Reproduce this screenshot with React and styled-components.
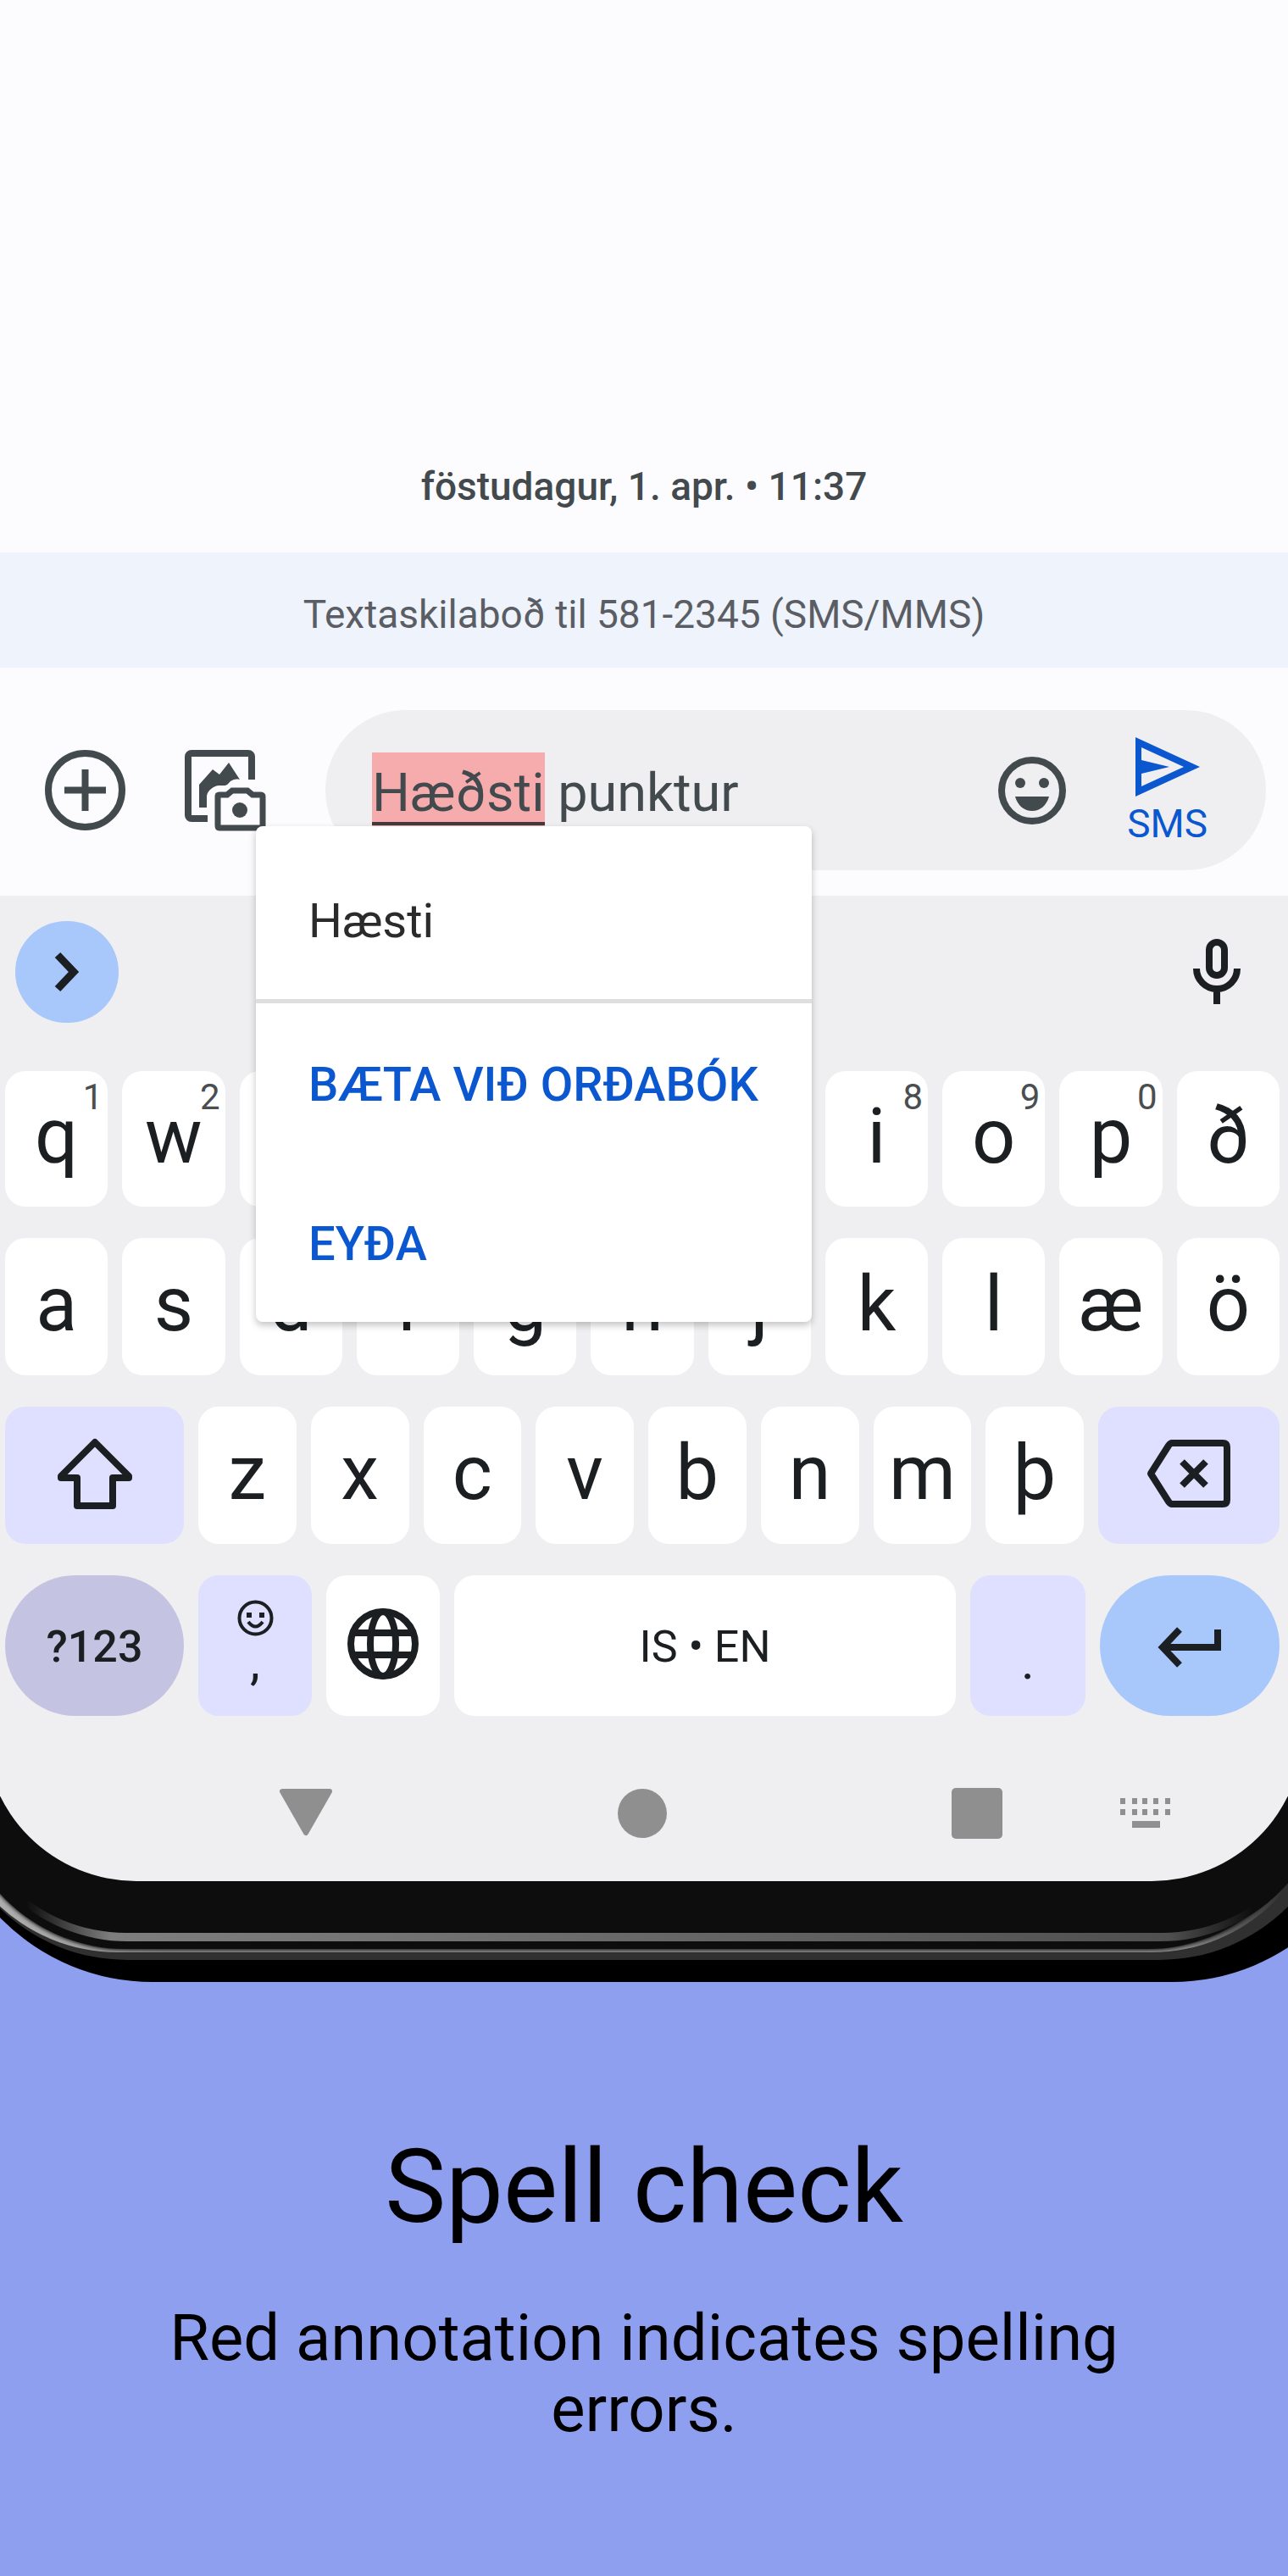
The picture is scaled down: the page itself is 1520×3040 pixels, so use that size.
import React from "react";
import styled, { createGlobalStyle } from "styled-components";

const ink = "#1b1f21";
const slate = "#434a4e";
const blue = "#0b57d0";

const GlobalStyle = createGlobalStyle`
  *, *::before, *::after { box-sizing: border-box; }
  body {
    margin: 0;
    background: #8f9fef;
    font-family: Roboto, "Noto Sans", "Liberation Sans", sans-serif;
  }
  button, input { font: inherit; }
  svg { display: block; }
`;

const Page = styled.main`
  overflow: hidden;
`;

/* Phone body: each layer is slightly smaller than the one around it. */
const Frame = styled.div`
  margin: 0 -114px 0 -71px;
  padding-bottom: 26px;
  background: #000;
  border-radius: 0 0 251px 251px;
`;

const Rim = styled.div`
  margin: 0 51px 0 6px;
  padding-bottom: 9px;
  background: #303030;
  border-radius: 0 0 215px 215px;
`;

const Shine = styled.div`
  margin: 0 19px 0 -1px;
  padding-bottom: 4px;
  background: linear-gradient(90deg, #b8b8b8 0, #a0a0a0 160px, #8a8a8a 260px, #8a8a8a 90%, #303030 97%);
  border-radius: 0 0 205px 205px;
`;

const Groove = styled.div`
  margin: 0 10px 0 14px;
  padding-bottom: 9px;
  background: #0d0d0d;
  border-radius: 0 0 200px 200px;
  box-shadow: 0 0 4px 1px #0d0d0d;
`;

const Glint = styled.div`
  margin: 0 -15px 0 3px;
  padding-bottom: 10px;
  background: linear-gradient(90deg, #0d0d0d 80px, #7e7e7e 180px, #757575 460px, #505050 calc(100% - 190px), #0d0d0d calc(100% - 90px));
  border-radius: 0 0 200px 200px;
`;

const Bezel = styled.div`
  margin: 0 7px;
  padding: 0 24px 61px;
  background: #0d0d0d;
  border-radius: 0 0 190px 190px;
`;

const Screen = styled.div`
  padding: 0 18px;
  background: linear-gradient(#fcfcff 1057px, #efeff1 1057px);
  border-radius: 0 0 179px 179px;
`;

const Conversation = styled.section`
  padding: 546px 40px 50px;
  text-align: center;
`;

const DateLine = styled.time`
  display: block;
  font-size: 46px;
  font-weight: 500;
  line-height: 56px;
  color: ${slate};
`;

const Recipient = styled.p`
  margin: 0;
  padding: 45px 40px 35px;
  background: #eef3fc;
  font-size: 46px;
  line-height: 56px;
  text-align: center;
  color: #5a5e64;
`;

const Composer = styled.form`
  display: flex;
  align-items: center;
  gap: 70px;
  padding: 50px 26px 30px 53px;
`;

const IconButton = styled.button`
  flex: none;
  display: block;
  padding: 0;
  border: 0;
  background: none;
  color: ${(p) => p.$color || ink};
`;

const Field = styled.div`
  position: relative;
  flex: 1;
  min-width: 0;
  display: flex;
  align-items: center;
  gap: 72px;
  height: 189px;
  padding: 0 69px 0 55px;
  border-radius: 95px;
  background: #efeff1;
`;

const MessageInput = styled.input`
  flex: 1;
  min-width: 0;
  height: 90px;
  padding: 6px 0 0;
  border: 0;
  outline: 0;
  font-size: 63px;
  color: ${slate};
  background:
    linear-gradient(#44393d, #44393d) 0 82px / 204px 4px no-repeat,
    linear-gradient(#f6abad, #f6abad) 0 0 / 204px 88px no-repeat;
`;

const SendButton = styled.button`
  flex: none;
  display: flex;
  flex-direction: column;
  align-items: center;
  gap: 4px;
  padding: 4px 0 0;
  border: 0;
  background: none;
  color: ${blue};
  font-size: 46px;
  line-height: 56px;
`;

const Suggestions = styled.div`
  position: absolute;
  z-index: 2;
  top: 137px;
  left: -82px;
  min-width: 656px;
  border-radius: 8px;
  background: #fff;
  box-shadow: 0 4px 8px rgba(0, 0, 0, 0.24);
`;

const SuggestionItem = styled.button`
  display: block;
  width: 100%;
  height: ${(p) => (p.$action ? 188 : 204)}px;
  padding: ${(p) => (p.$action ? 4 : 20)}px 60px 0 62px;
  border: 0;
  background: none;
  font-size: 56px;
  font-weight: ${(p) => (p.$action ? 500 : 400)};
  text-align: left;
  white-space: nowrap;
  color: ${(p) => (p.$action ? blue : "#2b2b2b")};
`;

const Divider = styled.hr`
  height: 5px;
  margin: 0;
  border: 0;
  background: #dedede;
`;

const Keyboard = styled.section`
  padding: 30px 10px 0 6px;
  background: #efeff1;
`;

const Toolbar = styled.div`
  display: flex;
  align-items: center;
  justify-content: space-between;
  padding: 0 46px 57px 12px;
`;

const ExpandButton = styled.button`
  display: grid;
  place-items: center;
  width: 122px;
  height: 120px;
  padding: 0;
  border: 0;
  border-radius: 61px;
  background: #a8c7fa;
  color: ${ink};
`;

const Rows = styled.div`
  display: grid;
  gap: 37px;
`;

const Row = styled.div`
  display: flex;
  gap: 17px;
  height: ${(p) => p.$height || 162}px;
`;

const tones = {
  plain: "#fff",
  soft: "#dfdfff",
  mode: "#c4c4e2",
  go: "#a8c7fa",
};

const Key = styled.button`
  position: relative;
  flex: ${(p) => (p.$width ? `0 0 ${p.$width}px` : "1 1 0")};
  min-width: 0;
  display: flex;
  flex-direction: column;
  align-items: center;
  justify-content: center;
  padding: ${(p) => (p.$label ? "4px 0 0" : "0 0 4px")};
  border: 0;
  border-radius: ${(p) => (p.$round ? 83 : 24)}px;
  background: ${(p) => tones[p.$tone || "plain"]};
  color: ${ink};
  font-size: ${(p) => (p.$label ? 52 : 90)}px;
  font-weight: ${(p) => (p.$round ? 500 : 400)};
  line-height: 1;
`;

const Hint = styled.span`
  position: absolute;
  top: 10px;
  right: 6px;
  font-size: 42px;
  line-height: 42px;
  color: #4a4e50;
`;

const Mark = styled.span`
  font-size: 60px;
  line-height: 60px;
`;

const PunctuationKey = styled(Key)`
  justify-content: flex-end;
  padding-bottom: 34px;
`;

const NavBar = styled.nav`
  display: flex;
  align-items: center;
  justify-content: space-between;
  height: 195px;
  padding: 34px 138px 0 329px;
`;

const NavGroup = styled.div`
  display: flex;
  align-items: center;
  gap: 138px;
`;

const Caption = styled.section`
  padding: 170px 180px 156px;
  text-align: center;
  color: #000;
`;

const Title = styled.h1`
  margin: 0;
  font-size: 121px;
  font-weight: 400;
  line-height: 144px;
`;

const Description = styled.p`
  margin: 64px 0 0;
  font-size: 76px;
  line-height: 84px;
`;

const Icon = ({ w, h, sw = 8, children }) => (
  <svg width={w} height={h} viewBox={`0 0 ${w} ${h}`} fill="none" stroke="currentColor" strokeWidth={sw} aria-hidden="true">
    {children}
  </svg>
);

const PlusIcon = () => (
  <Icon w={95} h={95}>
    <circle cx="47.5" cy="47.5" r="43.5" />
    <path d="M47.5 23v49M23 47.5h49" />
  </Icon>
);

const GalleryIcon = () => (
  <Icon w={96} h={96}>
    <path d="M79 35V8a4 4 0 0 0-4-4H8a4 4 0 0 0-4 4v69a4 4 0 0 0 4 4h19" />
    <path
      d="M33 23l8 6 11-14 13 20c-5-1-8 0-11 2-3 3-4 5-8 5-8 0-11 0-16 5-3 3-4 5-4 10v11h-9V41z"
      fill="currentColor"
      stroke="none"
    />
    <path d="M39 55q0-2 2-2h9l6-5h18l6 5h9q3 0 3 2v34q0 3-3 3H41q-2 0-2-3z" strokeWidth="7" />
    <circle cx="65" cy="71" r="9" fill="currentColor" stroke="none" />
  </Icon>
);

const GrinIcon = () => (
  <Icon w={80} h={80}>
    <circle cx="40" cy="40" r="36" />
    <circle cx="26" cy="31" r="6" fill="currentColor" stroke="none" />
    <circle cx="54" cy="31" r="6" fill="currentColor" stroke="none" />
    <path d="M20 47h40c-3 11-11 17-20 17s-17-6-20-17z" fill="currentColor" stroke="none" />
  </Icon>
);

const SendIcon = () => (
  <Icon w={76} h={70}>
    <path
      d="M0 0l76 35L0 70zM7 12v15l33 8-33 8v15l50-23z"
      fill="currentColor"
      fillRule="evenodd"
      stroke="none"
    />
  </Icon>
);

const ChevronIcon = () => (
  <Icon w={30} h={48} sw={9}>
    <path d="M4 4l19 20L4 44" />
  </Icon>
);

const MicIcon = () => (
  <Icon w={56} h={78}>
    <rect x="19" y="4" width="18" height="39" rx="9" />
    <path d="M4 35a24 24 0 0 0 48 0M28 59v18" />
  </Icon>
);

const ShiftIcon = () => (
  <Icon w={88} h={86}>
    <path d="M44 6L4 46v2h19v33h42V48h19v-2z" strokeLinejoin="round" />
  </Icon>
);

const BackspaceIcon = () => (
  <Icon w={100} h={80}>
    <path d="M30 4h60q5 0 5 5v62q0 5-5 5H30q-2 0-4-3L5 40 26 7q2-3 4-3z" strokeLinejoin="round" />
    <path d="M42 26l28 28M70 26L42 54" />
  </Icon>
);

const SmileIcon = () => (
  <Icon w={43} h={43} sw={4}>
    <circle cx="21.5" cy="21.5" r="19" />
    <path d="M11 15h6v6h-6zM26 15h6v6h-6z" fill="currentColor" stroke="none" />
    <path d="M13 26q8.500 11 17 0" />
  </Icon>
);

const GlobeIcon = () => (
  <Icon w={84} h={84}>
    <circle cx="42" cy="42" r="38" />
    <ellipse cx="42" cy="42" rx="15" ry="38" />
    <path d="M6 29h72M6 55h72" />
  </Icon>
);

const EnterIcon = () => (
  <Icon w={76} h={48}>
    <path d="M71 3v21H6M26 3L6 24l20 21" />
  </Icon>
);

const BackIcon = () => (
  <Icon w={64} h={60} sw={6}>
    <path d="M4 4h56L32 53z" fill="currentColor" strokeLinejoin="round" />
  </Icon>
);

const HomeIcon = () => (
  <Icon w={60} h={60}>
    <circle cx="30" cy="30" r="29" fill="currentColor" stroke="none" />
  </Icon>
);

const RecentIcon = () => (
  <Icon w={60} h={60}>
    <rect width="60" height="60" rx="5" fill="currentColor" stroke="none" />
  </Icon>
);

const ImeIcon = () => (
  <Icon w={61} h={35}>
    {[4, 18, 30, 43, 57].map((x) => (
      <path key={x} d={`M${x - 3} 0h6v7h-6zM${x - 3} 13h6v7h-6z`} fill="currentColor" stroke="none" />
    ))}
    <rect x="15" y="27" width="33" height="8" fill="currentColor" stroke="none" />
  </Icon>
);

const topRow = [
  ["q", "1"], ["w", "2"], ["e", "3"], ["r", "4"], ["t", "5"], ["y", "6"],
  ["u", "7"], ["i", "8"], ["o", "9"], ["p", "0"], ["ð", ""],
];
const homeRow = ["a", "s", "d", "f", "g", "h", "j", "k", "l", "æ", "ö"];
const bottomRow = ["z", "x", "c", "v", "b", "n", "m", "þ"];

const Compose = () => (
  <Composer onSubmit={(e) => e.preventDefault()}>
    <IconButton type="button" aria-label="Bæta við" $color={slate}><PlusIcon /></IconButton>
    <IconButton type="button" aria-label="Myndir" $color={slate}><GalleryIcon /></IconButton>
    <Field>
      <MessageInput aria-label="Textaskilaboð" defaultValue="Hæðsti punktur" spellCheck={false} />
      <IconButton type="button" aria-label="Tjákn" $color={slate}><GrinIcon /></IconButton>
      <SendButton type="submit"><SendIcon />SMS</SendButton>
      <Suggestions>
        <SuggestionItem type="button">Hæsti</SuggestionItem>
        <Divider />
        <SuggestionItem type="button" $action>BÆTA VIÐ ORÐABÓK</SuggestionItem>
        <SuggestionItem type="button" $action>EYÐA</SuggestionItem>
      </Suggestions>
    </Field>
  </Composer>
);

const Keys = () => (
  <Keyboard>
    <Toolbar>
      <ExpandButton aria-label="Opna valmynd"><ChevronIcon /></ExpandButton>
      <IconButton aria-label="Raddinnsláttur"><MicIcon /></IconButton>
    </Toolbar>
    <Rows>
      <Row $height={160}>
        {topRow.map(([letter, hint]) => (
          <Key key={letter}>{letter}{hint && <Hint>{hint}</Hint>}</Key>
        ))}
      </Row>
      <Row>
        {homeRow.map((letter) => <Key key={letter}>{letter}</Key>)}
      </Row>
      <Row>
        <Key $tone="soft" $width={211} aria-label="Shift"><ShiftIcon /></Key>
        {bottomRow.map((letter) => <Key key={letter}>{letter}</Key>)}
        <Key $tone="soft" $width={214} aria-label="Eyða staf"><BackspaceIcon /></Key>
      </Row>
      <Row $height={166}>
        <Key $tone="mode" $round $label $width={211}>?123</Key>
        <PunctuationKey $tone="soft" $width={134}><SmileIcon /><Mark>,</Mark></PunctuationKey>
        <Key $width={134} aria-label="Skipta um tungumál"><GlobeIcon /></Key>
        <Key $label>IS • EN</Key>
        <PunctuationKey $tone="soft" $width={136}><Mark>.</Mark></PunctuationKey>
        <Key $tone="go" $round $label $width={212} aria-label="Ný lína"><EnterIcon /></Key>
      </Row>
    </Rows>
  </Keyboard>
);

export default function App() {
  return (
    <Page>
      <GlobalStyle />
      <Frame><Rim><Shine><Groove><Glint><Bezel>
        <Screen>
          <Conversation><DateLine>föstudagur, 1. apr. • 11:37</DateLine></Conversation>
          <Recipient>Textaskilaboð til 581-2345 (SMS/MMS)</Recipient>
          <Compose />
          <Keys />
          <NavBar>
            <IconButton aria-label="Til baka" $color="#8f8f8f"><BackIcon /></IconButton>
            <IconButton aria-label="Heim" $color="#8f8f8f"><HomeIcon /></IconButton>
            <NavGroup>
              <IconButton aria-label="Nýleg forrit" $color="#8f8f8f"><RecentIcon /></IconButton>
              <IconButton aria-label="Velja lyklaborð" $color="#8f8f8f"><ImeIcon /></IconButton>
            </NavGroup>
          </NavBar>
        </Screen>
      </Bezel></Glint></Groove></Shine></Rim></Frame>
      <Caption>
        <Title>Spell check</Title>
        <Description>Red annotation indicates spelling errors.</Description>
      </Caption>
    </Page>
  );
}
